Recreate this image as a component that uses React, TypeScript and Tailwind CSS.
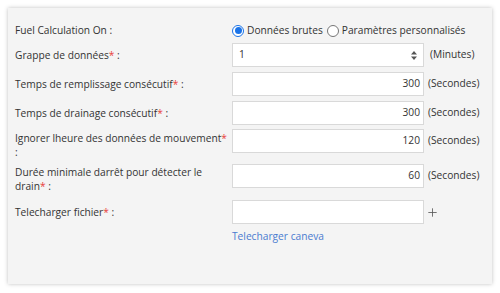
import { Plus } from 'lucide-react';

const font = { fontFamily: '"Open Sans", "Liberation Sans", sans-serif' };

function Label({ text, pt = 'pt-[5px]' }: { text: string; pt?: string }) {
  return (
    <div className={`w-[217px] shrink-0 pr-px leading-[14px] ${pt}`}>
      {text}
      <span className="text-[#e8403a]">*</span> :
    </div>
  );
}

function NumberRow({
  label,
  value,
  className = '',
  pt,
}: {
  label: string;
  value: string;
  className?: string;
  pt?: string;
}) {
  return (
    <div className={`flex items-start ${className}`}>
      <Label text={label} pt={pt} />
      <div className="w-[192px] h-[24px] bg-white border border-[#d9d9d9] flex items-center justify-end pr-[3px]">
        {value}
      </div>
      <div className="pl-[4px] h-[24px] flex items-center">(Secondes)</div>
    </div>
  );
}

export default function App() {
  return (
    <div className="w-[500px] h-[293px] bg-white p-2 text-[10.2px] text-[#333]" style={font}>
      <div className="h-[276px] bg-[#f4f4f4] shadow-[0_0_4px_rgba(0,0,0,0.25)] pl-[7px] pt-[14px]">
        {/* Fuel calculation */}
        <div className="flex items-center h-[18px]">
          <div className="w-[217px] shrink-0">Fuel Calculation On :</div>
          <label className="flex items-center gap-[3px]">
            <span className="w-[12px] h-[12px] rounded-full border border-[#1a73e8] flex items-center justify-center bg-white">
              <span className="w-[7px] h-[7px] rounded-full bg-[#1a73e8]" />
            </span>
            Données brutes
          </label>
          <label className="flex items-center gap-[3px] ml-[4px]">
            <span className="w-[12px] h-[12px] rounded-full border border-[#767676] bg-white" />
            Paramètres personnalisés
          </label>
        </div>

        {/* Grappe */}
        <div className="flex items-start mt-[3px]">
          <Label text="Grappe de données" />
          <div className="w-[192px] h-[24px] bg-white border border-[#d9d9d9] flex items-center justify-between pl-[6px] pr-[6px]">
            <span>1</span>
            <svg width="6" height="9" viewBox="0 0 6 9">
              <path d="M0 3.5 L3 0 L6 3.5 Z M0 5.5 L3 9 L6 5.5 Z" fill="#555" />
            </svg>
          </div>
          <div className="pl-[6px] h-[24px] flex items-center">(Minutes)</div>
        </div>

        <NumberRow className="mt-[5px]" label="Temps de remplissage consécutif" value="300" />
        <NumberRow className="mt-[5px]" label="Temps de drainage consécutif" value="300" />
        <NumberRow className="mt-[4px]" pt="pt-[2px]" label="Ignorer lheure des données de mouvement" value="120" />
        <NumberRow className="mt-[5px]" pt="pt-[1px]" label="Durée minimale darrêt pour détecter le drain" value="60" />

        {/* Upload */}
        <div className="flex items-start mt-[7px]">
          <Label text="Telecharger fichier" />
          <div>
            <div className="flex items-center">
              <div className="w-[192px] h-[24px] bg-white border border-[#d9d9d9]" />
              <Plus className="ml-[2px] text-[#555]" size={13} strokeWidth={1.5} />
            </div>
            <div className="mt-[5px] text-[#4a7bd0]">Telecharger caneva</div>
          </div>
        </div>
      </div>
    </div>
  );
}
